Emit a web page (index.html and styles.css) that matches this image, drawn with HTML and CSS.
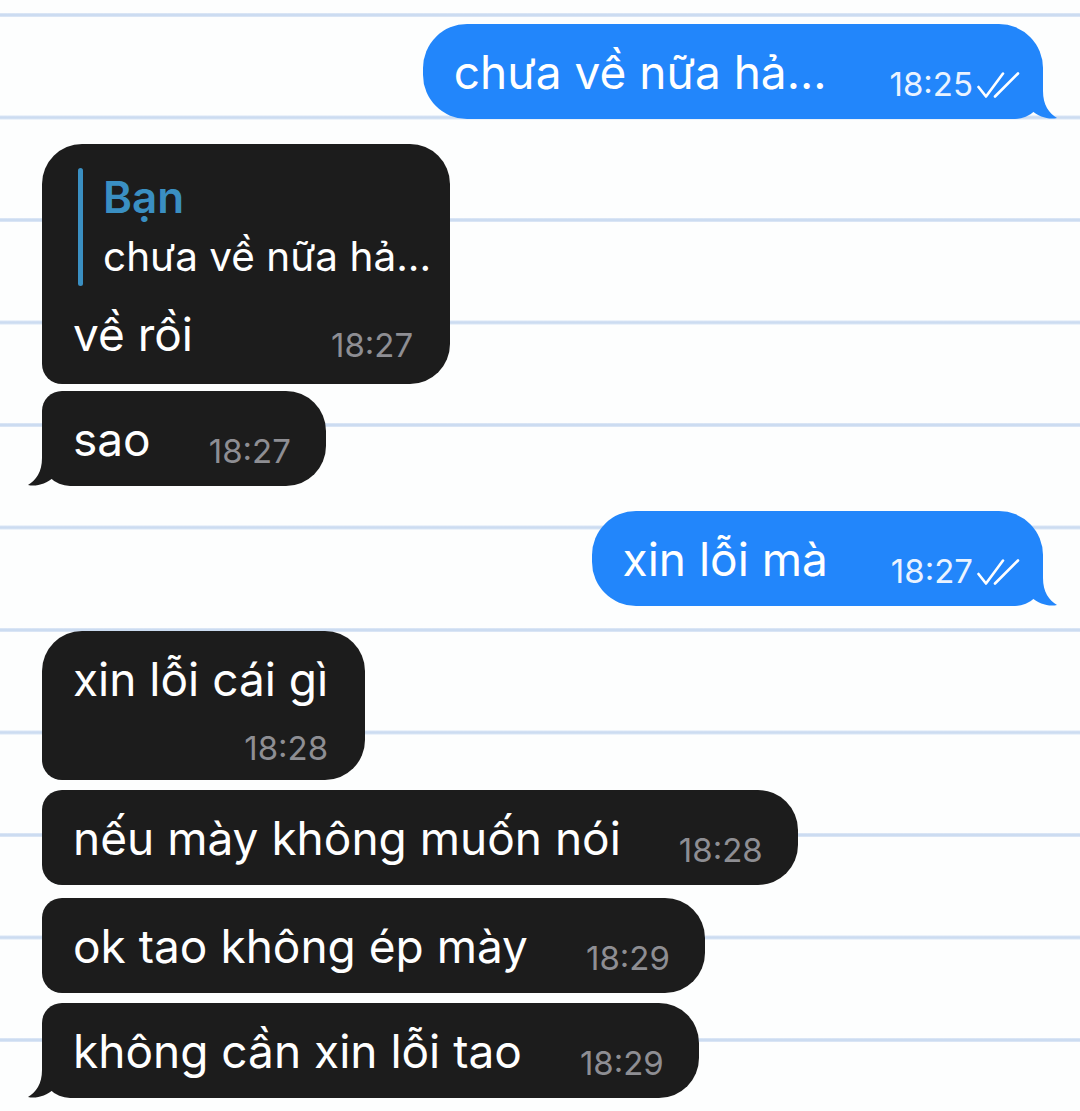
FILE: index.html
```html
<!DOCTYPE html>
<html lang="vi">
<head>
<meta charset="utf-8">
<title>Chat</title>
<link rel="stylesheet" href="styles.css">
</head>
<body>
<div class="chat">
  <div class="row out">
    <div class="bubble out">
      <span class="text">chưa về nữa hả...</span><span class="meta">18:25<svg class="check" width="44" height="28" viewBox="0 0 44 28"><path d="M2.5 16 L10 25.5 L27 2.5 M19 25.5 L42 2.5" fill="none" stroke="currentColor" stroke-width="2.6" stroke-linecap="round" stroke-linejoin="round"/></svg></span>
      <svg class="tail tail-r" width="26" height="36" viewBox="0 0 26 36"><path d="M12 0 L12 8 C12 22 18 30 26 35 C18 37 8 34 0 27 L0 0 Z"/></svg>
    </div>
  </div>

  <div class="row in mt-lg">
    <div class="bubble in first with-reply">
      <div class="reply">
        <div class="reply-bar"></div>
        <div class="reply-body">
          <div class="reply-name">Bạn</div>
          <div class="reply-text">chưa về nữa hả...</div>
        </div>
      </div>
      <div class="line"><span class="text">về rồi</span><span class="meta">18:27</span></div>
    </div>
  </div>

  <div class="row in mt-xs">
    <div class="bubble in last">
      <span class="text">sao</span><span class="meta">18:27</span>
      <svg class="tail tail-l" width="26" height="36" viewBox="0 0 26 36"><path d="M14 0 L14 8 C14 22 8 30 0 35 C8 37 18 34 26 27 L26 0 Z"/></svg>
    </div>
  </div>

  <div class="row out mt-lg">
    <div class="bubble out">
      <span class="text">xin lỗi mà</span><span class="meta">18:27<svg class="check" width="44" height="28" viewBox="0 0 44 28"><path d="M2.5 16 L10 25.5 L27 2.5 M19 25.5 L42 2.5" fill="none" stroke="currentColor" stroke-width="2.6" stroke-linecap="round" stroke-linejoin="round"/></svg></span>
      <svg class="tail tail-r" width="26" height="36" viewBox="0 0 26 36"><path d="M12 0 L12 8 C12 22 18 30 26 35 C18 37 8 34 0 27 L0 0 Z"/></svg>
    </div>
  </div>

  <div class="row in mt-lg">
    <div class="bubble in first stacked">
      <div class="text">xin lỗi cái gì</div>
      <div class="meta-row">18:28</div>
    </div>
  </div>

  <div class="row in mt-sm">
    <div class="bubble in mid">
      <span class="text">nếu mày không muốn nói</span><span class="meta">18:28</span>
    </div>
  </div>

  <div class="row in mt-md">
    <div class="bubble in mid">
      <span class="text">ok tao không ép mày</span><span class="meta">18:29</span>
    </div>
  </div>

  <div class="row in mt-sm">
    <div class="bubble in last">
      <span class="text">không cần xin lỗi tao</span><span class="meta">18:29</span>
      <svg class="tail tail-l" width="26" height="36" viewBox="0 0 26 36"><path d="M14 0 L14 8 C14 22 8 30 0 35 C8 37 18 34 26 27 L26 0 Z"/></svg>
    </div>
  </div>
</div>
</body>
</html>
```

FILE: styles.css
```css
html, body {
  margin: 0;
  padding: 0;
}

body {
  width: 1080px;
  height: 1111px;
  overflow: hidden;
  font-family: Inter, "Noto Sans", "Liberation Sans", sans-serif;
  background-color: #fdfefe;
  background-image: linear-gradient(to bottom,
    #e6eef9 0px, #ccdcf1 1px, #ccdcf1 3px, #e6eef9 4px, transparent 4px);
  background-size: 100% 102.5px;
  background-position: 0 13px;
  background-repeat: repeat-y;
}

.chat {
  display: flex;
  flex-direction: column;
  padding-top: 24px;
}

.row {
  display: flex;
}

.row.in {
  justify-content: flex-start;
  padding-left: 42px;
}

.row.out {
  justify-content: flex-end;
  padding-right: 37px;
}

.mt-lg { margin-top: 25px; }
.mt-md { margin-top: 13px; }
.mt-sm { margin-top: 10px; }
.mt-xs { margin-top: 7px; }

.bubble {
  position: relative;
  box-sizing: border-box;
  white-space: nowrap;
  font-size: 46px;
  line-height: 56px;
  padding: 20px 35px 19px 31px;
  color: #ffffff;
}

.bubble.in {
  background: #1c1c1c;
  border-radius: 40px;
}

.bubble.out {
  background: #2286fb;
  border-radius: 44px 44px 28px 44px;
  padding-right: 23px;
}

.bubble.in.first { border-radius: 40px 40px 40px 20px; }
.bubble.in.mid { border-radius: 20px 40px 40px 20px; }
.bubble.in.last { border-radius: 20px 40px 40px 28px; }

.meta {
  font-size: 33px;
  line-height: 30px;
  vertical-align: -7px;
  margin-left: 58px;
  color: #8e8e93;
}

.bubble.out .meta {
  color: #eaf3ff;
  margin-left: 63px;
}

.check {
  display: inline-block;
  vertical-align: -3px;
  margin-left: 3px;
  color: #ffffff;
}

.tail {
  position: absolute;
  bottom: 0;
}

.tail-l {
  left: -14px;
  fill: #1c1c1c;
}

.tail-r {
  right: -14px;
  fill: #2286fb;
}

/* reply bubble */
.bubble.with-reply {
  padding-bottom: 22px;
  padding-right: 37px;
}

.reply {
  display: flex;
  gap: 20px;
  margin: 4px -18px 0 5px;
}

.reply-bar {
  width: 5px;
  border-radius: 3px;
  background: #3a8fc2;
}

.reply-body {
  display: flex;
  flex-direction: column;
}

.reply-name {
  font-size: 44px;
  line-height: 59px;
  font-weight: 600;
  color: #3a8fc2;
}

.reply-text {
  font-size: 40.5px;
  line-height: 59px;
}

.line {
  margin-top: 20px;
  display: flex;
  justify-content: space-between;
  align-items: flex-end;
}

.line .meta {
  margin-left: 40px;
  margin-bottom: 2px;
}

/* two-line bubble */
.bubble.stacked {
  padding-bottom: 17px;
  padding-right: 37px;
}

.meta-row {
  margin-top: 26px;
  font-size: 33px;
  line-height: 30px;
  text-align: right;
  color: #8e8e93;
}
```
